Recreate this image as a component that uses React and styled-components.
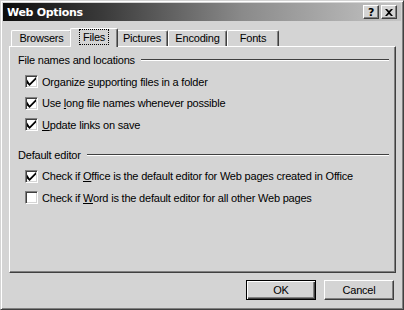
import React from "react";
import styled, { createGlobalStyle } from "styled-components";

const Global = createGlobalStyle`
  html, body { margin: 0; padding: 0; background: #d4d4d4; }
  body { font-family: Tahoma, "Liberation Sans", Arial, sans-serif; font-size: 11px; letter-spacing: -0.2px; color: #000; }
`;

const tabs = [
  { name: "Browsers", width: 61 },
  { name: "Files", width: 48, selected: true },
  { name: "Pictures", width: 52 },
  { name: "Encoding", width: 59 },
  { name: "Fonts", width: 52 },
];

const groups = [
  {
    title: "File names and locations",
    items: [
      { pre: "Organize ", key: "s", post: "upporting files in a folder", checked: true },
      { pre: "Use ", key: "l", post: "ong file names whenever possible", checked: true },
      { pre: "", key: "U", post: "pdate links on save", checked: true },
    ],
  },
  {
    title: "Default editor",
    items: [
      { pre: "Check if ", key: "O", post: "ffice is the default editor for Web pages created in Office", checked: true },
      { pre: "Check if ", key: "W", post: "ord is the default editor for all other Web pages", checked: false },
    ],
  },
];

const Check = () => (
  <svg width="9" height="9" viewBox="0 0 7 7">
    <path d="M0 2 L0 5 L2 7 L7 2 L7 0 L2 5 Z" fill="#000" />
  </svg>
);

const App = () => {
  return (
    <>
      <Global />
      <Window>
        <TitleBar>
          <Title>Web Options</Title>
          <CapButtons>
            <CapButton>?</CapButton>
            <CapButton>
              <svg width="8" height="7" viewBox="0 0 8 7">
                <path d="M0 0 L2 0 L4 2 L6 0 L8 0 L5 3.5 L8 7 L6 7 L4 5 L2 7 L0 7 L3 3.5 Z" fill="#000" />
              </svg>
            </CapButton>
          </CapButtons>
        </TitleBar>
        <Content>
          <TabStrip>
            {tabs.map((t) =>
              t.selected ? (
                <SelectedTab key={t.name} $w={t.width}>
                  <Focus>{t.name}</Focus>
                </SelectedTab>
              ) : (
                <Tab key={t.name} $w={t.width}>
                  {t.name}
                </Tab>
              )
            )}
          </TabStrip>
          <Panel>
            {groups.map((g) => (
              <Group key={g.title}>
                <GroupHead>
                  <GroupTitle>{g.title}</GroupTitle>
                  <GroupLine />
                </GroupHead>
                {g.items.map((it) => (
                  <Row key={it.post}>
                    <Box>{it.checked && <Check />}</Box>
                    <Label>
                      {it.pre}
                      <u>{it.key}</u>
                      {it.post}
                    </Label>
                  </Row>
                ))}
              </Group>
            ))}
          </Panel>
          <Footer>
            <DefaultButton>OK</DefaultButton>
            <Button>Cancel</Button>
          </Footer>
        </Content>
      </Window>
    </>
  );
};

const Window = styled.div`
  width: 404px;
  height: 310px;
  box-sizing: border-box;
  background: #d4d4d4;
  border-top: 1px solid #d4d4d4;
  border-left: 1px solid #d4d4d4;
  border-right: 1px solid #404040;
  border-bottom: 1px solid #404040;
  box-shadow: inset 1px 1px 0 #fff, inset -1px -1px 0 #808080;
  padding: 2px;
  display: flex;
  flex-direction: column;
`;
const TitleBar = styled.div`
  height: 18px;
  display: flex;
  align-items: center;
  justify-content: space-between;
  padding: 0 4px 0 4px;
  background: linear-gradient(to right, #0c0c0c 0%, #3a3a3a 25%, #8a8a8a 60%, #c4c4c4 100%);
`;
const Title = styled.div`
  color: #fff;
  font-weight: bold;
  font-size: 11px;
  font-family: Tahoma, "DejaVu Sans", sans-serif;
  letter-spacing: -0.3px;
`;
const CapButtons = styled.div`
  display: flex;
  gap: 2px;
`;
const CapButton = styled.div`
  width: 16px;
  height: 14px;
  box-sizing: border-box;
  background: #d4d4d4;
  border-top: 1px solid #fff;
  border-left: 1px solid #fff;
  border-right: 1px solid #404040;
  border-bottom: 1px solid #404040;
  box-shadow: inset -1px -1px 0 #808080;
  display: flex;
  align-items: center;
  justify-content: center;
  font-weight: bold;
  font-size: 11px;
  font-family: "DejaVu Sans", sans-serif;
  line-height: 1;
`;
const Content = styled.div`
  flex: 1;
  display: flex;
  flex-direction: column;
  padding: 8px 5px 0 6px;
`;
const TabStrip = styled.div`
  display: flex;
  align-items: flex-end;
  height: 18px;
  padding-left: 2px;
  position: relative;
  z-index: 1;
  margin-bottom: -1px;
`;
const Tab = styled.div`
  width: ${(p) => p.$w}px;
  height: 16px;
  box-sizing: border-box;
  background: #d4d4d4;
  border-top: 1px solid #fff;
  border-left: 1px solid #fff;
  border-right: 1px solid #404040;
  box-shadow: inset -1px 0 0 #808080;
  border-radius: 2px 2px 0 0;
  display: flex;
  align-items: center;
  justify-content: center;
  padding-bottom: 1px;
  margin-bottom: 1px;
`;
const SelectedTab = styled(Tab)`
  height: 19px;
  margin: 0 -2px;
  padding-bottom: 3px;
  position: relative;
  z-index: 2;
`;
const Focus = styled.span`
  outline: 1px dotted #000;
  outline-offset: 1px;
  padding: 0 2px;
`;
const Panel = styled.div`
  height: 227px;
  box-sizing: border-box;
  border-top: 1px solid #fff;
  border-left: 1px solid #fff;
  border-right: 1px solid #404040;
  border-bottom: 1px solid #404040;
  box-shadow: inset -1px -1px 0 #808080;
  padding: 6px 6px 0 8px;
  display: flex;
  flex-direction: column;
  gap: 12px;
`;
const Group = styled.div`
  display: flex;
  flex-direction: column;
`;
const GroupHead = styled.div`
  display: flex;
  align-items: center;
  height: 14px;
  margin-bottom: 4px;
`;
const GroupTitle = styled.div`
  margin-right: 6px;
`;
const GroupLine = styled.div`
  flex: 1;
  height: 0;
  border-top: 1px solid #404040;
  border-bottom: 1px solid #fff;
`;
const Row = styled.div`
  display: flex;
  align-items: center;
  height: 21.5px;
  padding-left: 7px;
`;
const Box = styled.div`
  width: 13px;
  height: 13px;
  box-sizing: border-box;
  background: #fff;
  border-top: 1px solid #808080;
  border-left: 1px solid #808080;
  border-right: 1px solid #fff;
  border-bottom: 1px solid #fff;
  box-shadow: inset 1px 1px 0 #404040, inset -1px -1px 0 #d4d4d4;
  display: flex;
  align-items: center;
  justify-content: center;
  margin-right: 4px;
`;
const Label = styled.div`
  white-space: nowrap;
`;
const Footer = styled.div`
  display: flex;
  justify-content: flex-end;
  gap: 8px;
  padding: 7px 2px 0 0;
`;
const Button = styled.div`
  width: 70px;
  height: 20px;
  box-sizing: border-box;
  background: #d4d4d4;
  border-top: 1px solid #fff;
  border-left: 1px solid #fff;
  border-right: 1px solid #404040;
  border-bottom: 1px solid #404040;
  box-shadow: inset -1px -1px 0 #808080;
  display: flex;
  align-items: center;
  justify-content: center;
`;
const DefaultButton = styled(Button)`
  border: 1px solid #000;
  box-shadow: inset 1px 1px 0 #fff, inset -1px -1px 0 #404040, inset -2px -2px 0 #808080;
`;

export default App;
